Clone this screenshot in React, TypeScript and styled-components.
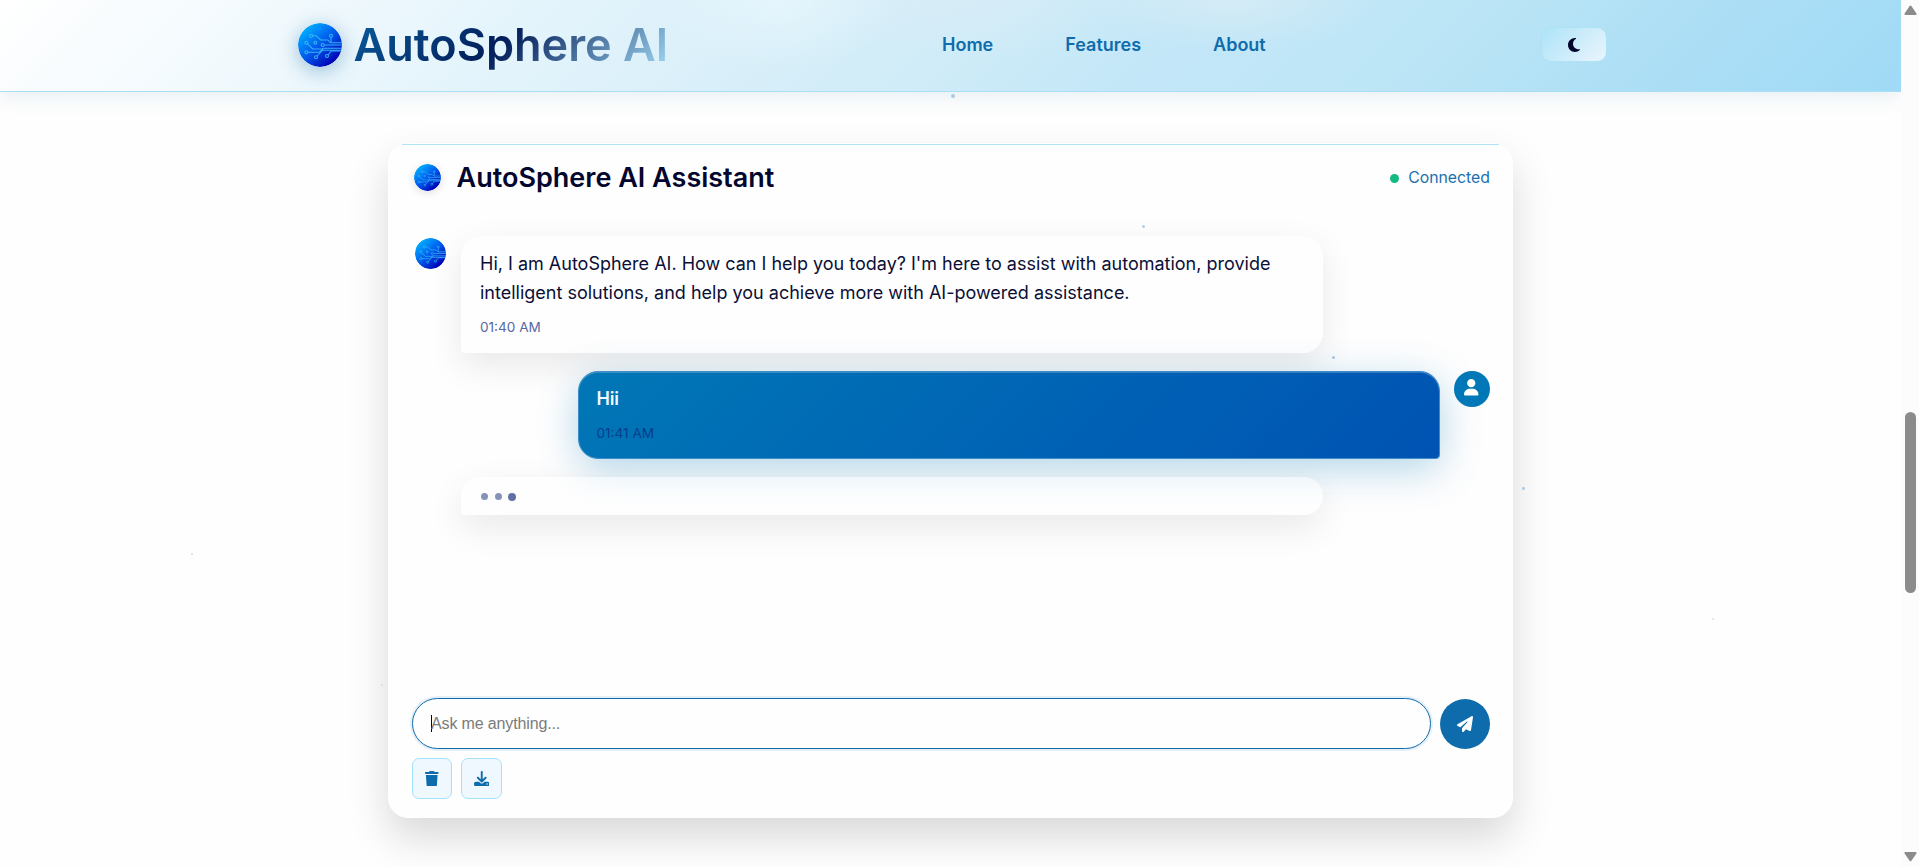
import React from "react";
import styled, { createGlobalStyle } from "styled-components";
import { FaDownload, FaMoon, FaPaperPlane, FaTrash, FaUser } from "react-icons/fa6";

const GlobalStyle = createGlobalStyle`
  *, *::before, *::after { box-sizing: border-box; }
  body {
    margin: 0;
    overflow: hidden;
    background: #fefefe;
    font-family: Inter, "Liberation Sans", sans-serif;
    color: #03062e;
  }
`;

const Screen = styled.div`
  position: relative;
  display: grid;
  grid-template-columns: minmax(0, 1fr) 18px;
  height: 867px;
  overflow: hidden;
`;

const Page = styled.div`
  display: flex;
  flex-direction: column;
  min-width: 0;
`;

const Header = styled.header`
  flex: none;
  display: flex;
  justify-content: center;
  height: 92px;
  border-bottom: 1px solid #a8dff5;
  background:
    radial-gradient(ellipse 120px 70px at 780px 0, rgba(236, 249, 255, 0.6), transparent),
    radial-gradient(ellipse 160px 60px at 970px 0, rgba(228, 236, 248, 0.35), transparent),
    radial-gradient(ellipse 150px 50px at 1235px 0, rgba(224, 238, 244, 0.6), transparent),
    linear-gradient(135deg, #ffffff 0%, #f1f9fd 15%, #e6f5fc 25%, #d9eff9 40%, #cdebf7 52%, #c4e7f8 60%, #bbe5f6 75%, #aedff5 85%, #a0daf6 100%);
  box-shadow: 0 4px 20px rgba(8, 84, 135, 0.1);
`;

const HeaderInner = styled.div`
  display: flex;
  align-items: center;
  width: 1312px;
  padding: 0 0 2px 3px;
`;

const Brand = styled.div`
  display: flex;
  align-items: center;
  gap: 12px;
  width: 370px;
`;

const BrandName = styled.span`
  font-size: 45px;
  line-height: 54px;
  font-weight: 600;
  white-space: nowrap;
  background: linear-gradient(135deg, #0a5c9c 0%, #03205c 45%, #0a2560 50%, #a3dcf5 100%);
  background-clip: text;
  -webkit-background-clip: text;
  color: transparent;
`;

const Nav = styled.nav`
  display: flex;
  gap: 72px;
  margin-left: 274.5px;
`;

const NavLink = styled.a`
  font-size: 18px;
  line-height: 24px;
  font-weight: 600;
  color: #0f6cac;
`;

const ThemeButton = styled.button`
  display: grid;
  place-items: center;
  width: 66px;
  height: 35px;
  margin-left: auto;
  padding: 0;
  border: 1px solid #ace3f8;
  border-radius: 10px;
  background: linear-gradient(135deg, #ade3f8, #eaf5fd);
  color: #03062e;
`;

const OrbSvg = styled.svg<{ $size: number; $shadow?: string }>`
  flex: none;
  display: block;
  width: ${(p) => p.$size}px;
  height: ${(p) => p.$size}px;
  border-radius: 50%;
  box-shadow: ${(p) => p.$shadow ?? "none"};
`;

const Main = styled.main`
  flex: 1;
  display: flex;
  justify-content: center;
  align-items: flex-start;
  padding-top: 51px;
`;

const Card = styled.section`
  display: flex;
  flex-direction: column;
  width: 1125px;
  height: 675px;
  border: 1px solid #fff;
  border-radius: 20px;
  background: #fefefe;
  box-shadow: 0 20px 40px rgba(0, 0, 0, 0.15);
`;

const CardHeader = styled.div`
  position: relative;
  display: flex;
  align-items: center;
  justify-content: space-between;
  height: 67px;
  padding: 0 22px 0 25px;

  &::before {
    content: "";
    position: absolute;
    inset: 0 13px auto;
    height: 1px;
    background: #b0e5f9;
  }
`;

const Assistant = styled.div`
  display: flex;
  align-items: center;
  gap: 15.5px;
`;

const AssistantName = styled.h2`
  margin: 0;
  font-size: 27px;
  line-height: 34px;
  font-weight: 600;
  color: #03062e;
`;

const Status = styled.div`
  display: flex;
  align-items: center;
  gap: 9px;
  font-size: 15.8px;
  line-height: 20px;
  color: #1a70ad;
`;

const StatusDot = styled.span`
  width: 9px;
  height: 9px;
  margin-top: 1px;
  border-radius: 50%;
  background: #14b981;
`;

const Messages = styled.div`
  flex: 1;
  display: flex;
  flex-direction: column;
  gap: 18px;
  padding: 25px 22px 0 26px;
`;

const BotRow = styled.div<{ $indent?: boolean }>`
  display: flex;
  align-items: flex-start;
  gap: 15px;
  padding-left: ${(p) => (p.$indent ? 46 : 0)}px;
  svg { margin-top: 2px; }
`;

const UserRow = styled.div`
  display: flex;
  align-items: flex-start;
  justify-content: flex-end;
  gap: 14px;
`;

const BotBubble = styled.div`
  width: 862px;
  height: 117px;
  padding: 13px 19px;
  border-radius: 20px 20px 20px 4px;
  background: #fefefe;
  box-shadow: 0 12px 35px rgba(0, 0, 0, 0.09);
`;

const TypingBubble = styled(BotBubble)`
  display: flex;
  align-items: center;
  gap: 6.5px;
  height: 38px;
  padding: 1px 20px 0;
  background: rgba(255, 255, 255, 0.45);
`;

const TypingDot = styled.span<{ $active?: boolean }>`
  flex: none;
  width: ${(p) => (p.$active ? 8 : 7)}px;
  height: ${(p) => (p.$active ? 8 : 7)}px;
  border-radius: 50%;
  background: ${(p) => (p.$active ? "#5f70a5" : "#8593b9")};
`;

const UserBubble = styled.div`
  width: 862px;
  height: 88px;
  padding: 12px 17.5px;
  border: 1px solid #3d8ec8;
  border-radius: 20px 20px 4px 20px;
  background: linear-gradient(135deg, #0077b6, #0053b3) padding-box, #3d8ec8;
  box-shadow: 0 10px 40px rgba(0, 119, 182, 0.3), inset 0 1px 0 rgba(255, 255, 255, 0.2);
`;

const MessageText = styled.p<{ $user?: boolean }>`
  margin: 0;
  font-size: 18px;
  line-height: 29px;
  font-weight: ${(p) => (p.$user ? 600 : 400)};
  letter-spacing: ${(p) => (p.$user ? "-0.2px" : "normal")};
  color: ${(p) => (p.$user ? "#f1f8ff" : "#0b0f36")};
  white-space: pre-line;
`;

const MessageTime = styled.time<{ $user?: boolean }>`
  display: block;
  margin-top: 9px;
  font-size: 13.6px;
  line-height: 22px;
  color: ${(p) => (p.$user ? "#06408b" : "#5868a3")};
`;

const UserAvatar = styled.div`
  display: grid;
  place-items: center;
  width: 36px;
  height: 36px;
  border-radius: 50%;
  background: #0077b6;
  color: #fff;
  font-size: 16.5px;
  svg { margin: 0 1px 3px 0; }
`;

const Composer = styled.div`
  display: flex;
  align-items: center;
  gap: 9px;
  padding: 0 22px 0 23px;
`;

const InputBox = styled.div`
  flex: 1;
  display: flex;
  align-items: center;
  height: 51px;
  padding-left: 18px;
  border: 1px solid #0f6cac;
  border-radius: 26px;
  background: #fefefe;
  box-shadow: 0 0 0 2px rgba(15, 108, 172, 0.1);
`;

const Caret = styled.span`
  width: 1px;
  height: 17px;
  background: #03062e;
`;

const Placeholder = styled.span`
  margin-left: -1px;
  font-family: "Liberation Sans", Arial, sans-serif;
  font-size: 16px;
  line-height: 20px;
  letter-spacing: -0.14px;
  color: #7b7b7b;
`;

const SendButton = styled.button`
  display: grid;
  place-items: center;
  width: 50px;
  height: 50px;
  margin-top: 1px;
  padding: 0;
  border: 0;
  border-radius: 50%;
  background: #0f6cac;
  color: #fff;
  font-size: 16px;
`;

const Actions = styled.div`
  display: flex;
  gap: 9px;
  padding: 9px 23px 18px;
`;

const ActionButton = styled.button<{ $width: number }>`
  display: grid;
  place-items: center;
  width: ${(p) => p.$width}px;
  height: 41px;
  padding: 0;
  border: 1px solid #a5e2f9;
  border-radius: 7px;
  background: #f0f8ff;
  color: #0f6cac;
  font-size: 15.5px;
`;

const Scrollbar = styled.div`
  display: flex;
  flex-direction: column;
  align-items: center;
  justify-content: space-between;
  padding: 5px 0 5px;
  background: #fcfcfc;
`;

const Thumb = styled.div`
  width: 11px;
  height: 181px;
  margin-top: 137px;
  border-radius: 6px;
  background: #8b8b8b;
`;

const Particle = styled.span<{ $x: number; $y: number; $size: number; $tone: string }>`
  position: absolute;
  left: ${(p) => p.$x}px;
  top: ${(p) => p.$y}px;
  width: ${(p) => p.$size}px;
  height: ${(p) => p.$size}px;
  border-radius: 50%;
  background: ${(p) => p.$tone};
`;

const particles = [
  { x: 951, y: 94, size: 4, tone: "#a9cce4" },
  { x: 1142, y: 225, size: 3, tone: "#b5cfe2" },
  { x: 1332, y: 356, size: 3, tone: "#a5c5df" },
  { x: 1522, y: 487, size: 2.5, tone: "#acd0e6" },
  { x: 191, y: 553, size: 2, tone: "#cddfea" },
  { x: 1712, y: 618, size: 2, tone: "#d5e4ed" },
  { x: 381, y: 684, size: 2, tone: "#d5dfe6" },
];

function Orb({ id, size, shadow }: { id: string; size: number; shadow?: string }) {
  return (
    <OrbSvg $size={size} $shadow={shadow} viewBox="0 0 132 132" aria-hidden="true">
      <defs>
        <linearGradient id={id} x1="0.12" y1="0.12" x2="0.8" y2="0.9">
          <stop offset="0" stopColor="#00b2ff" />
          <stop offset="0.5" stopColor="#005cee" />
          <stop offset="1" stopColor="#0000b4" />
        </linearGradient>
      </defs>
      <circle cx="66" cy="66" r="66" fill={`url(#${id})`} />
      <g fill="none" stroke="#35b4f7" strokeWidth="3.2">
        <path d="M43 38h11l14 13h22l7 8h35" />
        <path d="M99 43v15" />
        <path d="M28 62l16 16h32M79 66h53" />
        <path d="M29 88h34l13-12h56" />
        <path d="M57 99l16-17h59" />
        <path d="M90 96l10-12h26" />
        <circle cx="39" cy="38" r="4.5" />
        <circle cx="99" cy="38" r="4.5" />
        <circle cx="25" cy="59" r="4.5" />
        <circle cx="52" cy="59" r="4" />
        <circle cx="74" cy="66" r="4.5" />
        <circle cx="25" cy="88" r="4.5" />
        <circle cx="54" cy="103" r="4.5" />
        <circle cx="87" cy="99" r="4.5" />
      </g>
    </OrbSvg>
  );
}

function Arrow({ down }: { down?: boolean }) {
  return (
    <svg width="13" height="10" viewBox="0 0 13 10" aria-hidden="true">
      <path d={down ? "M1 0h11q1 .6.4 1.6L7.4 8.7q-.9 1-1.8 0L.6 1.6Q0 .6 1 0z" : "M1 10h11q1-.6.4-1.6L7.4.9q-.9-1-1.8 0L.6 8.4Q0 9.4 1 10z"} fill="#8b8b8b" />
    </svg>
  );
}

export default function App() {
  return (
    <>
      <GlobalStyle />
      <Screen>
        <Page>
          <Header>
            <HeaderInner>
              <Brand>
                <Orb id="orb-brand" size={44} shadow="0 4px 20px rgba(0, 90, 150, 0.36)" />
                <BrandName>AutoSphere AI</BrandName>
              </Brand>
              <Nav>
                <NavLink>Home</NavLink>
                <NavLink>Features</NavLink>
                <NavLink>About</NavLink>
              </Nav>
              <ThemeButton aria-label="Toggle theme">
                <FaMoon size={16} />
              </ThemeButton>
            </HeaderInner>
          </Header>
          <Main>
            <Card>
              <CardHeader>
                <Assistant>
                  <Orb id="orb-title" size={27} shadow="0 2px 8px rgba(0, 0, 0, 0.12)" />
                  <AssistantName>AutoSphere AI Assistant</AssistantName>
                </Assistant>
                <Status>
                  <StatusDot />
                  Connected
                </Status>
              </CardHeader>
              <Messages>
                <BotRow>
                  <Orb id="orb-message" size={31} />
                  <BotBubble>
                    <MessageText>
                      {"Hi, I am AutoSphere AI. How can I help you today? I'm here to assist with automation, provide\nintelligent solutions, and help you achieve more with AI-powered assistance."}
                    </MessageText>
                    <MessageTime>01:40 AM</MessageTime>
                  </BotBubble>
                </BotRow>
                <UserRow>
                  <UserBubble>
                    <MessageText $user>Hii</MessageText>
                    <MessageTime $user>01:41 AM</MessageTime>
                  </UserBubble>
                  <UserAvatar>
                    <FaUser />
                  </UserAvatar>
                </UserRow>
                <BotRow $indent>
                  <TypingBubble>
                    <TypingDot />
                    <TypingDot />
                    <TypingDot $active />
                  </TypingBubble>
                </BotRow>
              </Messages>
              <Composer>
                <InputBox>
                  <Caret />
                  <Placeholder>Ask me anything...</Placeholder>
                </InputBox>
                <SendButton aria-label="Send">
                  <FaPaperPlane />
                </SendButton>
              </Composer>
              <Actions>
                <ActionButton $width={40} aria-label="Clear chat">
                  <FaTrash />
                </ActionButton>
                <ActionButton $width={41} aria-label="Download chat">
                  <FaDownload />
                </ActionButton>
              </Actions>
            </Card>
          </Main>
        </Page>
        <Scrollbar>
          <Arrow />
          <Thumb />
          <Arrow down />
        </Scrollbar>
        {particles.map((p) => (
          <Particle key={p.x} $x={p.x} $y={p.y} $size={p.size} $tone={p.tone} />
        ))}
      </Screen>
    </>
  );
}
